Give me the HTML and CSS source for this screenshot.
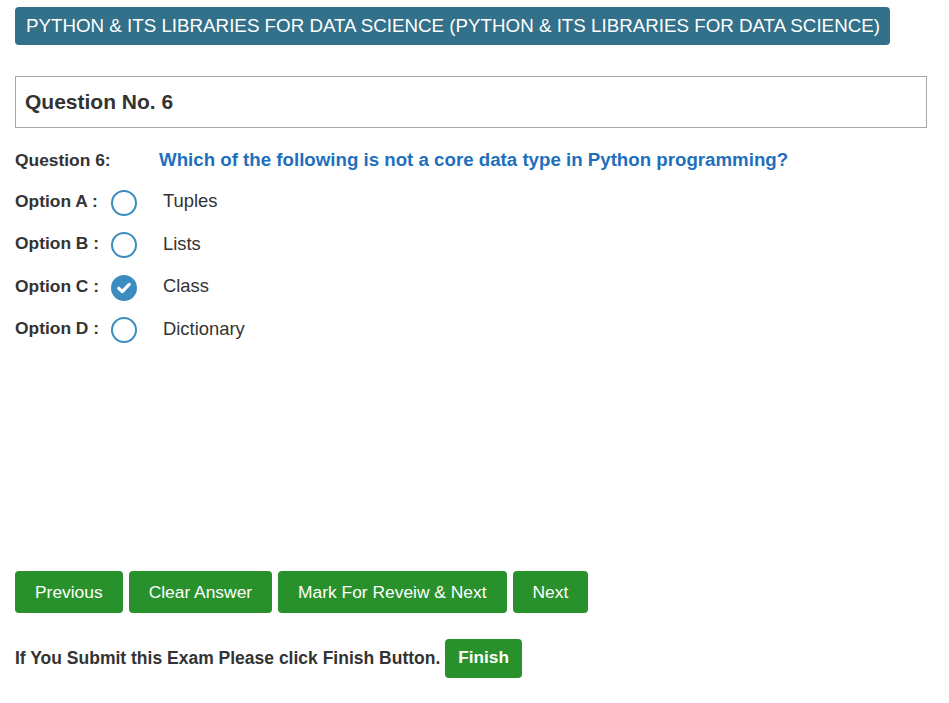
FILE: index.html
```html
<!DOCTYPE html>
<html>
<head>
<meta charset="utf-8">
<link rel="stylesheet" href="styles.css">
</head>
<body>
<div class="page">
  <div class="header-row"><div class="subject">PYTHON &amp; ITS LIBRARIES FOR DATA SCIENCE (PYTHON &amp; ITS LIBRARIES FOR DATA SCIENCE)</div></div>
  <div class="qbox">Question No. 6</div>
  <div class="qrow">
    <span class="qlabel">Question 6:</span>
    <span class="qtext">Which of the following is not a core data type in Python programming?</span>
  </div>
  <div class="opt">
    <span class="olabel">Option A :</span>
    <span class="radio"></span>
    <span class="otext">Tuples</span>
  </div>
  <div class="opt">
    <span class="olabel">Option B :</span>
    <span class="radio"></span>
    <span class="otext">Lists</span>
  </div>
  <div class="opt">
    <span class="olabel">Option C :</span>
    <span class="radio checked"><svg width="14" height="12" viewBox="0 0 14 12"><path d="M1.8 6.3 L5.3 9.6 L12.2 2.4" fill="none" stroke="#fff" stroke-width="3.2" stroke-linecap="round" stroke-linejoin="round"/></svg></span>
    <span class="otext">Class</span>
  </div>
  <div class="opt">
    <span class="olabel">Option D :</span>
    <span class="radio"></span>
    <span class="otext">Dictionary</span>
  </div>
  <div class="buttons">
    <span class="btn">Previous</span>
    <span class="btn">Clear Answer</span>
    <span class="btn">Mark For Reveiw &amp; Next</span>
    <span class="btn">Next</span>
  </div>
  <div class="finish-row">
    <span class="finish-text">If You Submit this Exam Please click Finish Button.</span>
    <span class="btn finish">Finish</span>
  </div>
</div>
</body>
</html>
```
FILE: styles.css
```css
html, body { margin: 0; padding: 0; background: #fff; }
body { font-family: "Liberation Sans", Arial, sans-serif; color: #333; }
.page { padding: 7px 22px 0 15px; }
.header-row { display: flex; }
.subject {
  background: #337089;
  color: #fff;
  font-size: 18.75px;
  line-height: 38px;
  height: 38px;
  padding: 0 10px 0 11px;
  border-radius: 4px;
  white-space: nowrap;
}
.qbox {
  margin-top: 31px;
  border: 1px solid #aaa5a8;
  height: 50px;
  line-height: 50px;
  padding-left: 9px;
  font-weight: bold;
  font-size: 21px;
  color: #333;
}
.qrow { display: flex; align-items: center; margin-top: 21px; height: 22px; }
.qlabel { width: 144px; font-weight: bold; font-size: 17.4px; }
.qtext { font-weight: bold; font-size: 18.7px; color: #1f6fbd; }
.opt { display: flex; align-items: center; height: 42.5px; }
.qrow + .opt { margin-top: 9px; }
.olabel { width: 96px; font-weight: bold; font-size: 17.4px; }
.radio {
  width: 26px; height: 26px; box-sizing: border-box;
  border: 2px solid #3b8cc0; border-radius: 50%;
  display: flex; align-items: center; justify-content: center;
  margin-top: 3px;
}
.radio.checked { background: #3b8cc0; }
.otext { margin-left: 26px; font-size: 18.4px; color: #333; }
.buttons { display: flex; gap: 6px; margin-top: 221px; }
.btn {
  background: #28912b;
  color: #fff;
  font-size: 17.4px;
  height: 42px;
  line-height: 42px;
  padding: 0 20px;
  border-radius: 4px;
  white-space: nowrap;
}
.finish-row { display: flex; align-items: center; margin-top: 26px; gap: 5px; }
.finish-text { font-weight: bold; font-size: 17.5px; }
.btn.finish { font-weight: bold; font-size: 17.2px; height: 39px; line-height: 37px; padding: 0 13px; }
```
